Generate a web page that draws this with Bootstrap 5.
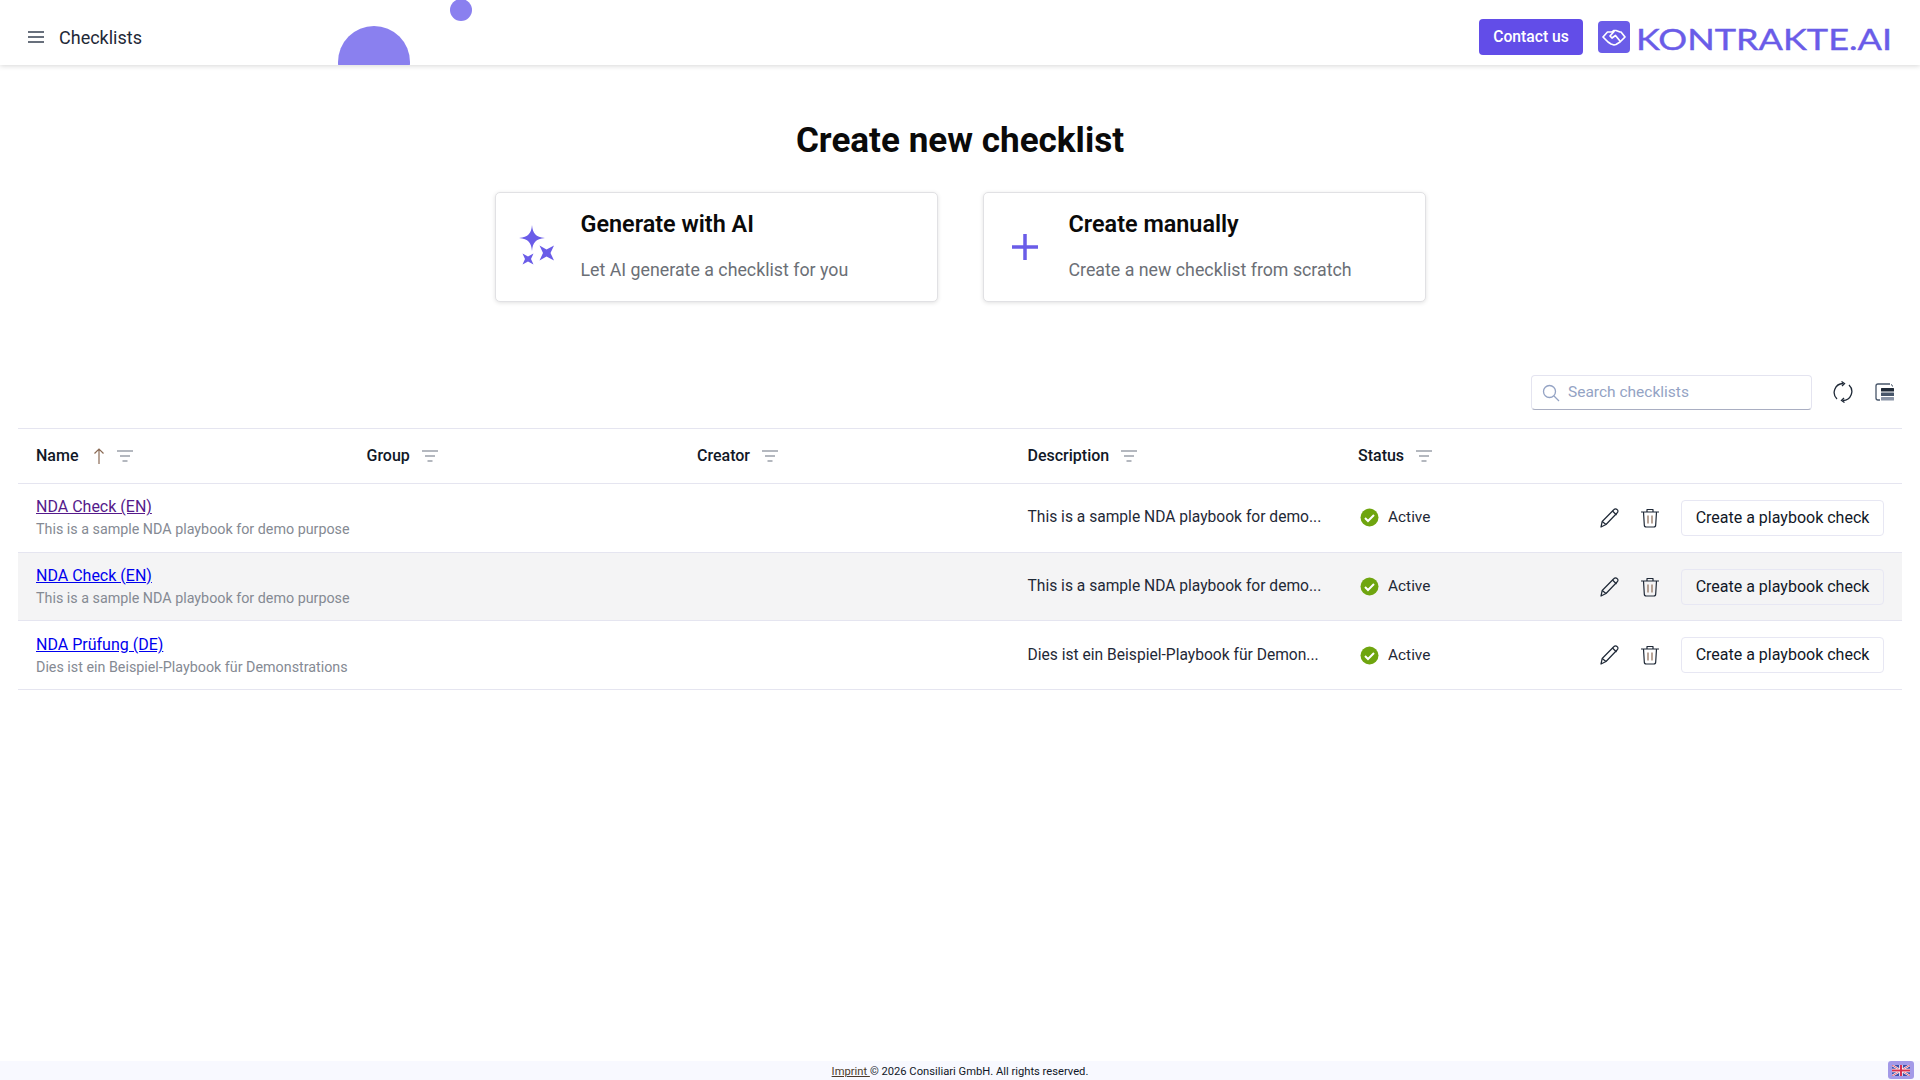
<!DOCTYPE html>
<html lang="en">
<head>
    <meta charset="UTF-8">
    <meta name="viewport" content="width=device-width, initial-scale=1.0">
    <title>Checklists</title>
    <link href="https://cdn.jsdelivr.net/npm/bootstrap@5.3.0/dist/css/bootstrap.min.css" rel="stylesheet">
    <style>
        body { font-family: Roboto, "Liberation Sans", sans-serif; color: #111827; min-height: 100vh; background: #fff; }
        .top-bar { height: 65px; padding: 9px 27px 0 28px; box-shadow: 0 1px 5px rgba(0,0,0,.16); background: #fff; position: relative; overflow: hidden; }
        .top-title { font-size: 18px; margin-left: 15px; color: #1f2937; }
        .blob-big { position: absolute; left: 338px; top: 26px; width: 72px; height: 72px; border-radius: 50%; background: #8a80ef; }
        .blob-small { position: absolute; left: 450px; top: -1px; width: 22px; height: 22px; border-radius: 50%; background: #8a80ef; }
        .contact-btn { background: #624de8; color: #fff; font-size: 15.7px; font-weight: 500; border: 0; border-radius: 4px; height: 36px; width: 104px; padding: 0; margin-right: 15px; }
        .logo-tile { width: 32px; height: 32px; border-radius: 4px; background: #6a5ce8; display: flex; align-items: center; justify-content: center; margin-right: 7px; }
        .page-heading { font-size: 35.1px; font-weight: 700; color: #0a0a0a; text-align: center; margin: 54px 0 30px; line-height: 43px; }
        .choice-row { display: flex; justify-content: center; gap: 45px; }
        .choice-tile { width: 443px; height: 110px; border: 1px solid #e1e1e4; border-radius: 5px; box-shadow: 0 1px 4px rgba(0,0,0,.12); display: flex; align-items: center; background: #fff; }
        .choice-icon { width: 83.5px; margin-right: 1.5px; display: flex; justify-content: center; margin-top: -4px; }
        .choice-title { font-size: 23.4px; font-weight: 600; color: #0a0a0a; line-height: 28px; margin-bottom: 20.5px; margin-top: -3px; }
        .choice-text { font-size: 17.8px; color: #6b6f76; line-height: 22px; }
        .tool-row { display: flex; justify-content: flex-end; align-items: center; padding: 0 26px 0 18px; margin-top: 73px; height: 35px; }
        .tool-row > svg { margin-top: -2px; }
        .search-box { width: 281px; height: 35px; border: 1px solid #e4e4f0; border-bottom-color: #a9aec2; border-radius: 4px; display: flex; align-items: center; padding-left: 10px; gap: 8px; margin-right: 21px; margin-bottom: 0; }
        .search-box input { border: 0; outline: 0; width: 220px; font-size: 15.5px; padding: 0; background: transparent; }
        .search-box input::placeholder { color: #94a3c4; opacity: 1; }
        .tool-gap { margin-right: 22px; }
        .list-wrap { margin: 18px 18px 0; }
        .list-table { table-layout: fixed; width: 1884px; margin: 0; border-top: 1px solid #e5e5f0; color: #1f2937; }
        .table.list-table > * > * > * { border-bottom: 1px solid #e5e5f0; padding: 0 0 0 18px; vertical-align: middle; box-shadow: none; background: transparent; color: inherit; }
        .list-table thead tr { height: 55px; }
        .list-table tbody tr { height: 68.7px; }
        .table.list-table th { font-size: 16px; font-weight: 500; color: #111827; }
        .list-table td { font-size: 15.6px; }
        .table.list-table tr.row-hover > td { background: #f4f4f5; }
        .head-cell { display: flex; align-items: center; }
        .head-cell svg { margin-left: 12px; }
        .name-link { display: block; font-size: 16px; line-height: 19px; color: #0000ee; }
        .name-seen { color: #551a8b; }
        .name-sub { font-size: 14.3px; color: #858a93; line-height: 18px; margin-top: 4px; white-space: nowrap; }
        .state-cell { display: flex; align-items: center; gap: 9px; font-size: 15.4px; padding-left: 2px; }
        .act-cell { display: flex; align-items: center; justify-content: flex-end; padding-right: 18px; }
        .check-btn { width: 203px; height: 36px; padding: 0; border: 1px solid #e7e7f3; border-radius: 4px; background: transparent; font-size: 16px; color: #111827; margin-left: 22px; }
        .act-cell svg + svg { margin-left: 22px; }
        .foot-bar { position: fixed; left: 0; right: 0; bottom: 0; height: 19px; background: #f8f9ff; text-align: center; font-size: 11.2px; line-height: 21px; color: #111827; }
        .foot-bar a { color: #4b3a2a; }
        .flag-btn { position: absolute; right: 6px; top: 0; width: 26px; height: 18px; border-radius: 3px; background: #a39ae8; display: flex; align-items: center; justify-content: center; }
    </style>
</head>
<body>
    <!-- Top bar -->
    <nav class="top-bar d-flex align-items-center">
        <svg width="16" height="12" viewBox="0 0 16 12"><path d="M0 1h16M0 6h16M0 11h16" stroke="#374151" stroke-width="1.6"/></svg>
        <span class="top-title">Checklists</span>
        <span class="blob-big"></span>
        <span class="blob-small"></span>
        <div class="ms-auto d-flex align-items-center">
            <button class="contact-btn" type="button">Contact us</button>
            <div class="logo-tile">
                <svg width="24" height="17" viewBox="0 0 24 17" fill="none" stroke="#fff" stroke-width="1.700" stroke-linejoin="round" stroke-linecap="round">
                    <path d="M1 8 5.500 3H10l2-1.500h2L18 3h1l4 5-5 5-4 2.500-2 .5-3-1-3-2z"/>
                    <path d="M12 2.500 8 7l2 2 3.500-2.500L18 12"/>
                </svg>
            </div>
            <svg width="256" height="44" viewBox="0 0 256 44"><text x="-1" y="35" textLength="256" lengthAdjust="spacingAndGlyphs" font-family="Lato, 'Liberation Sans', sans-serif" font-size="29" stroke="#6a5ce8" stroke-width=".4" fill="#6a5ce8">KONTRAKTE.AI</text></svg>
        </div>
    </nav>

    <h1 class="page-heading">Create new checklist</h1>

    <div class="choice-row">
        <div class="choice-tile">
            <div class="choice-icon">
                <svg width="36" height="41" viewBox="0 0 36 41" fill="#6a5ce8">
                    <path d="M13 0c.8 8.500 3.500 12 13 13-9.500 1-12.200 4.500-13 13-.8-8.500-3.500-12-13-13C9.500 12 12.200 8.500 13 0z"/>
                    <path d="M20.500 20.500 27.500 24.500 35 20.500 31.500 28 35 35.500 27.500 31.500 20.500 35.500 24 28z"/>
                    <path d="M3.500 28.500 9 31.500 14.500 28.500 12 34 14.500 39.500 9 36.500 3.500 39.500 6 34z"/>
                </svg>
            </div>
            <div>
                <div class="choice-title">Generate with AI</div>
                <div class="choice-text">Let AI generate a checklist for you</div>
            </div>
        </div>
        <div class="choice-tile">
            <div class="choice-icon">
                <svg style="margin-top:4px" width="28" height="28" viewBox="0 0 28 28"><path d="M14 1v26M1 14h26" stroke="#6a5ce8" stroke-width="3.500"/></svg>
            </div>
            <div>
                <div class="choice-title">Create manually</div>
                <div class="choice-text">Create a new checklist from scratch</div>
            </div>
        </div>
    </div>

    <div class="tool-row">
        <label class="search-box">
            <svg width="18" height="18" viewBox="0 0 18 18" fill="none" stroke="#94a3c4" stroke-width="1.300"><circle cx="7.500" cy="7.500" r="6"/><path d="m12 12 5 5"/></svg>
            <input type="text" placeholder="Search checklists">
        </label>
        <svg class="tool-gap" width="20" height="22" viewBox="0 0 20 22" fill="none" stroke="#1f2937" stroke-width="1.300">
            <path d="M4 18A9 9 0 0 1 10 2.500"/><path d="m8.500 .5 3 2-2.500 2.500"/>
            <path d="M16 4a9 9 0 0 1-6 15.500"/><path d="m11.500 21.500-3-2 2.500-2.500"/>
        </svg>
        <svg width="19" height="18" viewBox="0 0 19 18" fill="none">
            <path d="M15 1H3a2 2 0 0 0-2 2v12a2 2 0 0 0 2 2h2" stroke="#475569" stroke-width="1.300"/>
            <path d="M16 1.500a2 2 0 0 1 1.500 2" stroke="#475569" stroke-width="1"/>
            <rect x="6" y="5" width="13" height="3.500" rx=".5" fill="#1f2937"/>
            <rect x="6" y="9.500" width="13" height="3.500" rx=".5" fill="#475569"/>
            <rect x="6" y="14" width="13" height="3.500" rx=".5" fill="#8a94a6"/>
        </svg>
    </div>

    <div class="list-wrap">
        <table class="table list-table">
            <colgroup>
                <col style="width:330.5px"><col style="width:330.5px"><col style="width:330.5px"><col style="width:330.5px"><col style="width:200px"><col>
            </colgroup>
            <thead>
                <tr>
                    <th>
                        <div class="head-cell">Name
                            <svg style="margin-left:15px" width="12" height="16" viewBox="0 0 12 16" fill="none" stroke="#8a6a55" stroke-width="1.200"><path d="M6 16V1M1.500 5.500 6 1l4.500 4.500"/></svg>
                            <svg style="margin-left:12px" width="16" height="12" viewBox="0 0 16 12" fill="none" stroke="#6b7280" stroke-width="1.200"><path d="M0 1h16M3 6h10M5.500 11h5"/></svg>
                        </div>
                    </th>
                    <th><div class="head-cell">Group <svg width="16" height="12" viewBox="0 0 16 12" fill="none" stroke="#6b7280" stroke-width="1.200"><path d="M0 1h16M3 6h10M5.500 11h5"/></svg></div></th>
                    <th><div class="head-cell">Creator <svg width="16" height="12" viewBox="0 0 16 12" fill="none" stroke="#6b7280" stroke-width="1.200"><path d="M0 1h16M3 6h10M5.500 11h5"/></svg></div></th>
                    <th><div class="head-cell">Description <svg width="16" height="12" viewBox="0 0 16 12" fill="none" stroke="#6b7280" stroke-width="1.200"><path d="M0 1h16M3 6h10M5.500 11h5"/></svg></div></th>
                    <th><div class="head-cell">Status <svg width="16" height="12" viewBox="0 0 16 12" fill="none" stroke="#6b7280" stroke-width="1.200"><path d="M0 1h16M3 6h10M5.500 11h5"/></svg></div></th>
                    <th></th>
                </tr>
            </thead>
            <tbody id="rows"></tbody>
        </table>
    </div>

    <footer class="foot-bar">
        <a href="#">Imprint </a>© 2026 Consiliari GmbH. All rights reserved.
        <span class="flag-btn">
            <svg width="18" height="11" viewBox="0 0 18 11">
                <rect width="18" height="11" fill="#3f4fa8"/>
                <path d="M0 0l18 11M18 0 0 11" stroke="#fff" stroke-width="2"/>
                <path d="M0 0l18 11M18 0 0 11" stroke="#d9304f" stroke-width=".8"/>
                <path d="M9 0v11M0 5.500h18" stroke="#fff" stroke-width="3.500"/>
                <path d="M9 0v11M0 5.500h18" stroke="#d9304f" stroke-width="2"/>
            </svg>
        </span>
    </footer>

    <script src="https://cdn.jsdelivr.net/npm/bootstrap@5.3.0/dist/js/bootstrap.bundle.min.js"></script>
    <script>
        const checklists = [
            { name: 'NDA Check (EN)', sub: 'This is a sample NDA playbook for demo purpose', desc: 'This is a sample NDA playbook for demo...', seen: true },
            { name: 'NDA Check (EN)', sub: 'This is a sample NDA playbook for demo purpose', desc: 'This is a sample NDA playbook for demo...', hover: true },
            { name: 'NDA Prüfung (DE)', sub: 'Dies ist ein Beispiel-Playbook für Demonstrations', desc: 'Dies ist ein Beispiel-Playbook für Demon...' }
        ];

        const rows = document.getElementById('rows');
        checklists.forEach(item => {
            const tr = document.createElement('tr');
            if (item.hover) tr.classList.add('row-hover');
            tr.innerHTML = `
                <td>
                    <a href="#" class="name-link ${item.seen ? 'name-seen' : ''}">${item.name}</a>
                    <div class="name-sub">${item.sub}</div>
                </td>
                <td></td>
                <td></td>
                <td>${item.desc}</td>
                <td>
                    <div class="state-cell">
                        <svg width="19" height="19" viewBox="0 0 19 19"><circle cx="9.500" cy="9.500" r="9" fill="#6fa50f"/><path d="m5 10 3 3 6-6" fill="none" stroke="#fff" stroke-width="2"/></svg>
                        Active
                    </div>
                </td>
                <td>
                    <div class="act-cell">
                        <svg width="19" height="20" viewBox="0 0 19 20" fill="none" stroke="#1f2937" stroke-width="1.200" stroke-linejoin="round"><path d="M1 19l1.200-5.500L14 1.500a2 2 0 0 1 3 0 2 2 0 0 1 .5 3L6 16.500z"/><path d="M12.500 3l4 4M2.200 13.500 6 16.500"/></svg>
                        <svg width="18" height="20" viewBox="0 0 18 20" fill="none" stroke="#1f2937" stroke-width="1.200" stroke-linejoin="round"><path d="M0 4h18M6 4V1.500h6V4M2.500 4l.8 13a2 2 0 0 0 2 2h7.400a2 2 0 0 0 2-2l.8-13"/><path d="M7 7.500v8M11 7.500v8" stroke="#8a6a55"/></svg>
                        <button type="button" class="check-btn">Create a playbook check</button>
                    </div>
                </td>`;
            rows.appendChild(tr);
        });
    </script>
</body>
</html>
